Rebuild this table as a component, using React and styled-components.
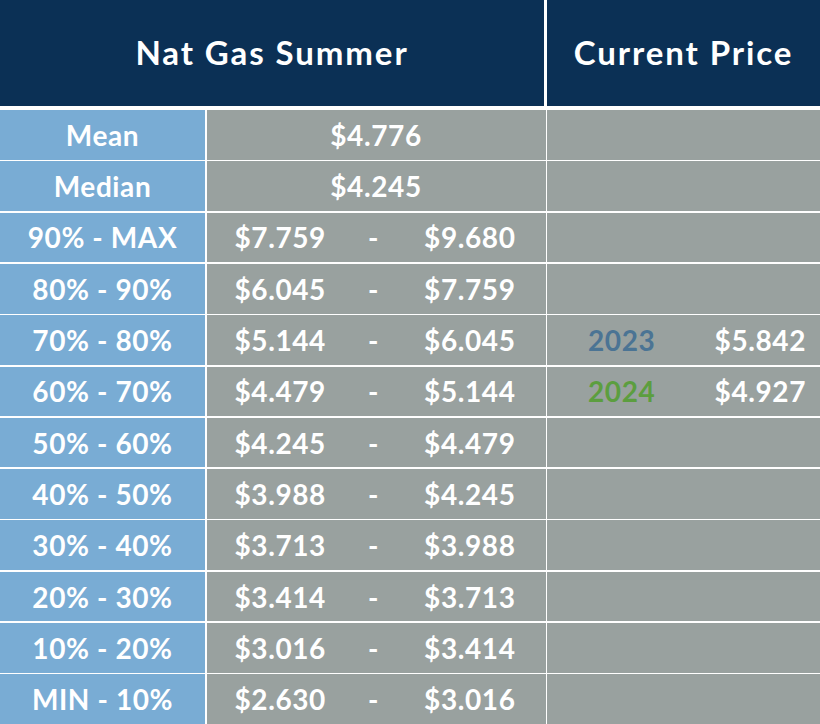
import React from "react"
import styled, { createGlobalStyle } from "styled-components"

const GlobalStyle = createGlobalStyle`
  html, body {
    margin: 0;
    padding: 0;
    background: #ffffff;
  }
  body {
    font-family: "Lato", "Open Sans", sans-serif;
  }
`

const NAVY = "#0b3055"
const BLUE = "#79acd4"
const GRAY = "#99a19f"

const Board = styled.div`
  width: 820px;
  height: 724px;
  display: flex;
  flex-direction: column;
  gap: 4px;
  background: #ffffff;
`

const Header = styled.div`
  display: grid;
  grid-template-columns: 544px 1fr;
  gap: 3px;
  height: 106px;
`

const HeadCell = styled.div`
  background: ${NAVY};
  color: #ffffff;
  display: flex;
  align-items: center;
  justify-content: center;
  font-size: 33px;
  font-weight: 700;
  letter-spacing: 1.9px;
  padding-bottom: 2px;
`

const Body = styled.div`
  flex: 1;
  display: grid;
  grid-template-columns: 205px 339px 1fr;
  grid-auto-rows: 1fr;
  column-gap: 1.5px;
  row-gap: 1.7px;
`

const Cell = styled.div`
  background: ${({ $tone }) => ($tone === "label" ? BLUE : GRAY)};
  color: #ffffff;
  font-size: 28px;
  font-weight: 700;
  letter-spacing: 0.6px;
  display: flex;
  align-items: center;
  justify-content: center;
`

const Range = styled.div`
  display: grid;
  grid-template-columns: 1fr 56px 1fr;
  width: 100%;
  padding: 0 30px 0 28px;
  box-sizing: border-box;
  align-items: center;
`

const Low = styled.span`
  text-align: left;
`

const Dash = styled.span`
  text-align: center;
  padding-right: 3px;
`

const High = styled.span`
  text-align: right;
`

const Quote = styled.div`
  display: flex;
  justify-content: space-between;
  width: 100%;
  padding: 0 14px 0 41px;
  box-sizing: border-box;
`

const Year = styled.span`
  color: ${({ $color }) => $color};
`

const stats = [
  ["Mean", "$4.776"],
  ["Median", "$4.245"],
]

const ranges = [
  ["90% - MAX", "$7.759", "$9.680"],
  ["80% - 90%", "$6.045", "$7.759"],
  ["70% - 80%", "$5.144", "$6.045"],
  ["60% - 70%", "$4.479", "$5.144"],
  ["50% - 60%", "$4.245", "$4.479"],
  ["40% - 50%", "$3.988", "$4.245"],
  ["30% - 40%", "$3.713", "$3.988"],
  ["20% - 30%", "$3.414", "$3.713"],
  ["10% - 20%", "$3.016", "$3.414"],
  ["MIN - 10%", "$2.630", "$3.016"],
]

// current price quotes sit next to the band they fall into
const quotes = {
  2: { year: "2023", color: "#4b7494", price: "$5.842" },
  3: { year: "2024", color: "#5c9e3f", price: "$4.927" },
}

const App = () => {
  return (
    <>
      <GlobalStyle />
      <Board>
        <Header>
          <HeadCell>Nat Gas Summer</HeadCell>
          <HeadCell>Current Price</HeadCell>
        </Header>
        <Body>
          {stats.map(([label, value]) => (
            <React.Fragment key={label}>
              <Cell $tone="label">{label}</Cell>
              <Cell>{value}</Cell>
              <Cell />
            </React.Fragment>
          ))}
          {ranges.map(([label, low, high], i) => (
            <React.Fragment key={label}>
              <Cell $tone="label">{label}</Cell>
              <Cell>
                <Range>
                  <Low>{low}</Low>
                  <Dash>-</Dash>
                  <High>{high}</High>
                </Range>
              </Cell>
              <Cell>
                {quotes[i] && (
                  <Quote>
                    <Year $color={quotes[i].color}>{quotes[i].year}</Year>
                    <span>{quotes[i].price}</span>
                  </Quote>
                )}
              </Cell>
            </React.Fragment>
          ))}
        </Body>
      </Board>
    </>
  )
}

export default App
